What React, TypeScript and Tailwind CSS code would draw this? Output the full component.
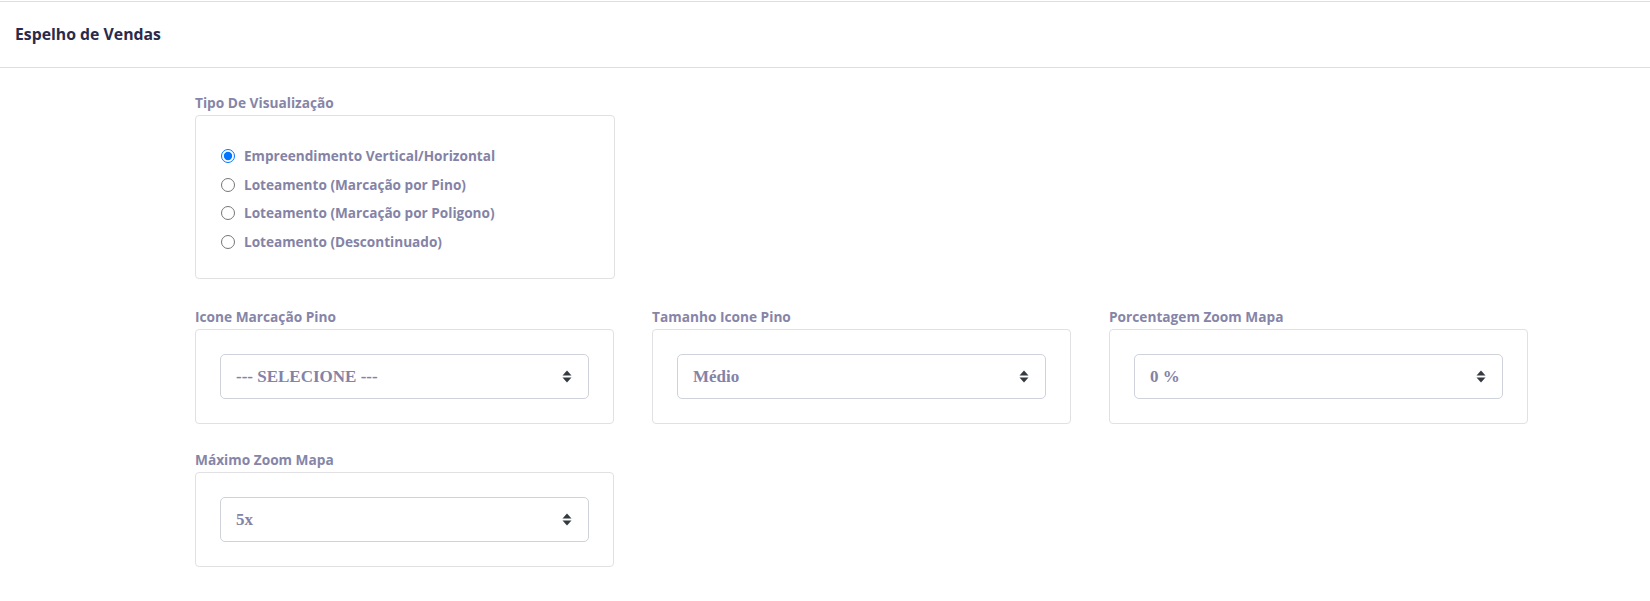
import { useState } from 'react'

const TIPOS = [
  'Empreendimento Vertical/Horizontal',
  'Loteamento (Marcação por Pino)',
  'Loteamento (Marcação por Poligono)',
  'Loteamento (Descontinuado)',
]

function Arrows() {
  return (
    <svg width="10" height="13" viewBox="0 0 10 13" className="shrink-0">
      <path d="M5 0.5 L9.5 5.5 H0.5 Z" fill="#343a40" />
      <path d="M5 12.5 L9.5 7.5 H0.5 Z" fill="#343a40" />
    </svg>
  )
}

function FakeSelect({ value }: { value: string }) {
  return (
    <div className="h-[45px] rounded-[5px] border border-[#cfd2da] bg-white flex items-center justify-between pl-[15px] pr-[16px]">
      <span className="font-['Liberation_Serif',serif] font-bold text-[17px] text-[#8483a6]">{value}</span>
      <Arrows />
    </div>
  )
}

function Field({ label, value }: { label: string; value: string }) {
  return (
    <div>
      <label className="block text-[13.7px] leading-[18px] font-bold text-[#8685a7] mb-[3px]">{label}</label>
      <div className="border border-[#e1e1e4] rounded-[4px] p-[24px]">
        <FakeSelect value={value} />
      </div>
    </div>
  )
}

export default function App() {
  const [tipo, setTipo] = useState(0)

  return (
    <div className="min-h-[601px] bg-white font-['Open_Sans',sans-serif]">
      <div className="mt-px border-y border-[#dedede] h-[67px] flex items-center px-[15px]">
        <h1 className="text-[15.8px] font-bold text-[#2b2a4a]">Espelho de Vendas</h1>
      </div>

      <div className="pl-[195px] pt-[26px]">
        <div className="w-[420px]">
          <label className="block text-[13.7px] leading-[18px] font-bold text-[#8685a7] mb-[3px]">Tipo De Visualização</label>
          <div className="border border-[#e1e1e4] rounded-[4px] pt-[26px] pb-[22px] pl-[25px]">
            {TIPOS.map((t, i) => (
              <label key={t} className="flex items-center h-[28.5px] cursor-pointer">
                <input
                  type="radio"
                  name="tipo"
                  checked={tipo === i}
                  onChange={() => setTipo(i)}
                  className="m-0 w-[14px] h-[14px] accent-[#0075ff]"
                />
                <span className="ml-[9px] text-[13.6px] font-bold text-[#8483a6]">{t}</span>
              </label>
            ))}
          </div>
        </div>

        <div className="grid grid-cols-[repeat(3,419px)] gap-x-[38px] gap-y-[27px] mt-[29px]">
          <Field label="Icone Marcação Pino" value="--- SELECIONE ---" />
          <Field label="Tamanho Icone Pino" value="Médio" />
          <Field label="Porcentagem Zoom Mapa" value="0 %" />
          <Field label="Máximo Zoom Mapa" value="5x" />
        </div>
      </div>
    </div>
  )
}
